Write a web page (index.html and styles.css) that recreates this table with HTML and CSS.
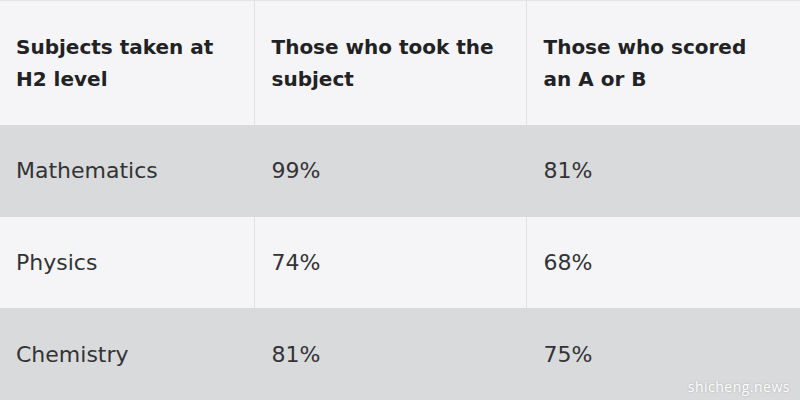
FILE: index.html
```html
<!DOCTYPE html>
<html>
<head>
<meta charset="utf-8">
<link rel="stylesheet" href="styles.css">
</head>
<body>
<div class="wrap">
  <table class="results">
    <colgroup>
      <col class="c1">
      <col class="c2">
      <col class="c3">
    </colgroup>
    <thead>
      <tr>
        <th>Subjects taken at<br>H2 level</th>
        <th>Those who took the<br>subject</th>
        <th>Those who scored<br>an A or B</th>
      </tr>
    </thead>
    <tbody>
      <tr class="shade r1">
        <td>Mathematics</td>
        <td>99%</td>
        <td>81%</td>
      </tr>
      <tr class="plain r2">
        <td>Physics</td>
        <td>74%</td>
        <td>68%</td>
      </tr>
      <tr class="shade r3">
        <td>Chemistry</td>
        <td>81%</td>
        <td>75%</td>
      </tr>
    </tbody>
  </table>
  <div class="watermark">shicheng.news</div>
</div>
</body>
</html>
```

FILE: styles.css
```css
html, body {
  margin: 0;
  padding: 0;
  background: #f5f5f7;
}
.wrap {
  position: relative;
  width: 800px;
  height: 400px;
  overflow: hidden;
}
.results {
  width: 800px;
  border-collapse: collapse;
  table-layout: fixed;
  font-family: "DejaVu Sans", sans-serif;
  color: #2a2a2c;
}
.c1 { width: 254px; }
.c2 { width: 272px; }
.c3 { width: 274px; }
.results th, .results td {
  text-align: left;
  vertical-align: middle;
  padding: 0 10px 0 17px;
  border-left: 1px solid #e2e2e4;
  border-right: 1px solid #e2e2e4;
  white-space: nowrap;
}
.results th:first-child, .results td:first-child {
  border-left: none;
  padding-left: 16px;
}
.results thead tr {
  height: 124px;
  background: #f5f5f7;
  border-top: 1px solid #e4e4e6;
}
.results th {
  font-size: 20px;
  font-weight: bold;
  line-height: 32px;
  color: #222224;
}
.results td {
  font-size: 22px;
  font-weight: normal;
  color: #333335;
}
.results .r1 { height: 92px; }
.results .r2 { height: 91px; }
.results .r3 { height: 93px; }
.shade { background: #d9dadc; }
.results .shade td {
  border-left-color: #d9dadc;
  border-right-color: #d9dadc;
}
.plain { background: #f5f5f7; }
.watermark {
  position: absolute;
  right: 10px;
  bottom: 4px;
  font-family: "Open Sans", sans-serif;
  font-size: 14px;
  letter-spacing: 0.5px;
  color: #ffffff;
  text-shadow: 0 0 2px rgba(0,0,0,0.25);
}
```
